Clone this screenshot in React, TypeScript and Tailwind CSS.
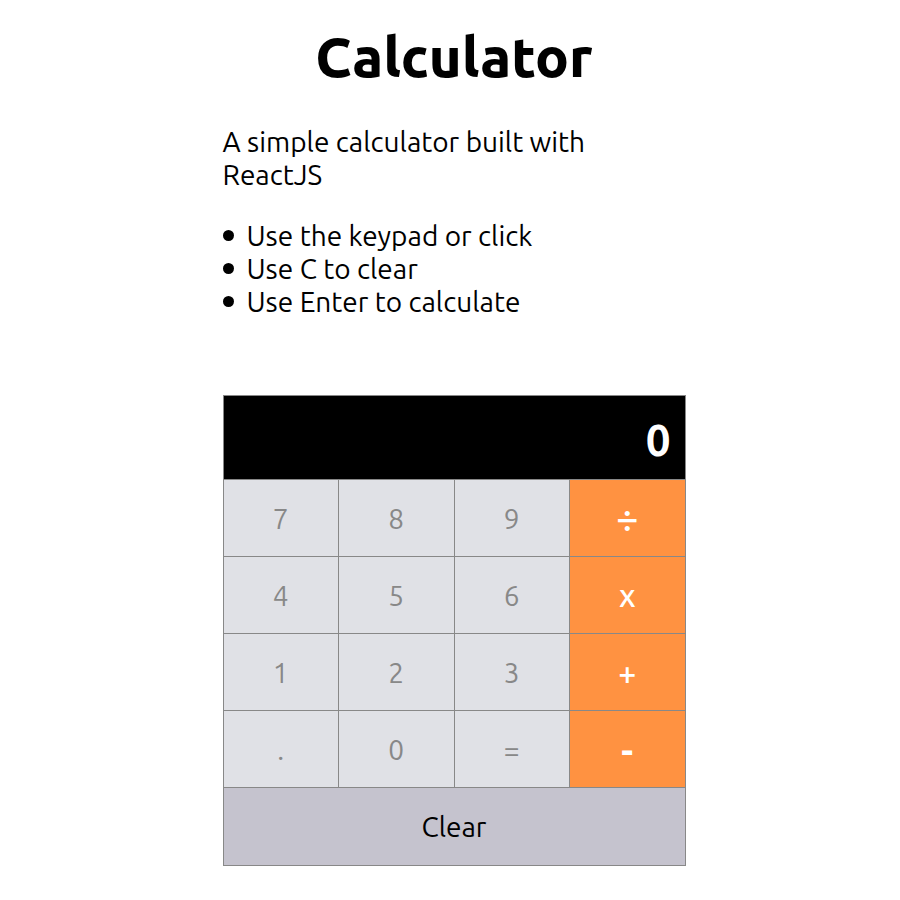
import { useCallback, useEffect, useState } from 'react';

type Key = { label: string; value: string; name?: string; style: string };

const digitStyle = 'bg-[#e0e1e6] text-[28px] text-[#888888] pt-px';
const operatorStyle = 'bg-[#ff9241] font-medium text-white';

const keys: Key[] = [
  { label: '7', value: '7', style: digitStyle },
  { label: '8', value: '8', style: digitStyle },
  { label: '9', value: '9', style: digitStyle },
  { label: '÷', value: '/', name: 'divide', style: `${operatorStyle} text-[40px]` },
  { label: '4', value: '4', style: digitStyle },
  { label: '5', value: '5', style: digitStyle },
  { label: '6', value: '6', style: digitStyle },
  { label: 'x', value: '*', name: 'multiply', style: `${operatorStyle} text-[32px]` },
  { label: '1', value: '1', style: digitStyle },
  { label: '2', value: '2', style: digitStyle },
  { label: '3', value: '3', style: digitStyle },
  { label: '+', value: '+', name: 'add', style: `${operatorStyle} text-[32px]` },
  { label: '.', value: '.', name: 'decimal point', style: digitStyle },
  { label: '0', value: '0', style: digitStyle },
  { label: '=', value: '=', name: 'equals', style: digitStyle },
  { label: '-', value: '-', name: 'subtract', style: 'bg-[#ff9241] pt-1 text-[36px] font-bold text-white' },
];

type State = { shown: string; stored: number | null; operator: string | null; fresh: boolean };

const initial: State = { shown: '0', stored: null, operator: null, fresh: true };

function compute(a: number, b: number, operator: string) {
  if (operator === '+') return a + b;
  if (operator === '-') return a - b;
  if (operator === '*') return a * b;
  return a / b;
}

function press(state: State, value: string): State {
  if (value === 'C') return initial;
  if (/^[0-9.]$/.test(value)) {
    if (state.fresh) return { ...state, shown: value === '.' ? '0.' : value, fresh: value === '0' };
    if (value === '.' && state.shown.includes('.')) return state;
    return { ...state, shown: state.shown + value };
  }
  const current = Number(state.shown);
  const result =
    state.operator !== null && state.stored !== null
      ? compute(state.stored, current, state.operator)
      : current;
  return {
    shown: String(result),
    stored: value === '=' ? null : result,
    operator: value === '=' ? null : value,
    fresh: true,
  };
}

const hints = ['Use the keypad or click', 'Use C to clear', 'Use Enter to calculate'];

export default function App() {
  const [state, setState] = useState(initial);
  const handle = useCallback((value: string) => setState((s) => press(s, value)), []);

  useEffect(() => {
    const onKey = (event: KeyboardEvent) => {
      const value = event.key === 'Enter' ? '=' : event.key.toUpperCase();
      if (/^[0-9.+\-*/=C]$/.test(value)) {
        event.preventDefault();
        handle(value);
      }
    };
    window.addEventListener('keydown', onKey);
    return () => window.removeEventListener('keydown', onKey);
  }, [handle]);

  return (
    <main className="min-h-screen bg-white pt-6 pb-8 pl-2 font-['Ubuntu','Noto_Sans',sans-serif] text-black">
      <div className="mx-auto w-full max-w-[463px]">
        <h1 className="text-center text-[56px] leading-[66px] font-extrabold">Calculator</h1>
        <div className="mt-[35px] text-[28px] leading-[33px]">
          <p className="max-w-[400px]">A simple calculator built with ReactJS</p>
          <ul className="mt-7">
            {hints.map((hint) => (
              <li
                key={hint}
                className="flex items-center gap-[13px] before:size-[11px] before:shrink-0 before:rounded-full before:bg-black"
              >
                {hint}
              </li>
            ))}
          </ul>
        </div>
        <section
          aria-label="Calculator"
          className="mt-[77px] grid grid-cols-4 gap-px bg-[#888888] p-px"
        >
          <output className="col-span-4 flex h-[83px] items-center justify-end overflow-hidden bg-black px-[14px] pt-1 text-[44px] font-bold text-white">
            {state.shown}
          </output>
          {keys.map((key) => (
            <button
              key={key.value}
              type="button"
              aria-label={key.name}
              onClick={() => handle(key.value)}
              className={`flex h-[76px] items-center justify-center leading-none ${key.style}`}
            >
              {key.label}
            </button>
          ))}
          <button
            type="button"
            onClick={() => handle('C')}
            className="col-span-4 h-[77px] bg-[#c5c3ce] text-[28px]"
          >
            Clear
          </button>
        </section>
      </div>
    </main>
  );
}
